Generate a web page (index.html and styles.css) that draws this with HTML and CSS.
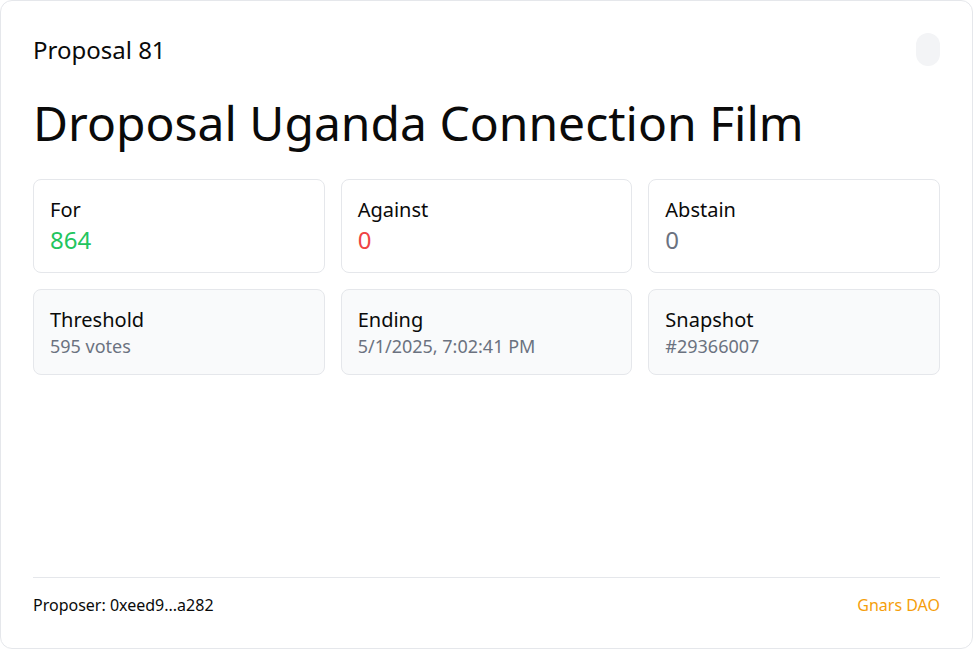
FILE: index.html
```html
<!DOCTYPE html>
<html lang="en">
<head>
<meta charset="utf-8">
<title>Proposal 81</title>
<link rel="stylesheet" href="styles.css">
</head>
<body>
<div class="card">
  <div class="header">
    <div class="number">Proposal 81</div>
    <div class="pill"></div>
  </div>
  <h1 class="title">Droposal Uganda Connection Film</h1>
  <div class="grid">
    <div class="stat">
      <div class="label">For</div>
      <div class="value green">864</div>
    </div>
    <div class="stat">
      <div class="label">Against</div>
      <div class="value red">0</div>
    </div>
    <div class="stat">
      <div class="label">Abstain</div>
      <div class="value gray">0</div>
    </div>
    <div class="stat muted">
      <div class="label">Threshold</div>
      <div class="sub">595 votes</div>
    </div>
    <div class="stat muted">
      <div class="label">Ending</div>
      <div class="sub">5/1/2025, 7:02:41 PM</div>
    </div>
    <div class="stat muted">
      <div class="label">Snapshot</div>
      <div class="sub">#29366007</div>
    </div>
  </div>
  <div class="footer">
    <div class="proposer">Proposer: 0xeed9...a282</div>
    <div class="dao">Gnars DAO</div>
  </div>
</div>
</body>
</html>
```
FILE: styles.css
```css
html, body {
  margin: 0;
  padding: 0;
  background: #ffffff;
}
body {
  font-family: "Noto Sans", "Open Sans", sans-serif;
  color: #0a0a0a;
}
.card {
  box-sizing: border-box;
  width: 973px;
  height: 649px;
  border: 1px solid #e5e7eb;
  border-radius: 12px;
  padding: 32px;
  display: flex;
  flex-direction: column;
}
.header {
  display: flex;
  justify-content: space-between;
  align-items: center;
}
.number {
  font-size: 24px;
  line-height: 32px;
}
.pill {
  width: 24px;
  height: 33px;
  border-radius: 12px;
  background: #f3f4f6;
}
.title {
  margin: 33px 0 32px;
  font-size: 48px;
  line-height: 48px;
  font-weight: 400;
}
.grid {
  display: grid;
  grid-template-columns: repeat(3, 1fr);
  column-gap: 16px;
  row-gap: 16px;
}
.stat {
  border: 1px solid #e5e7eb;
  border-radius: 8px;
  padding: 16px;
}
.stat.muted {
  background: #f9fafb;
}
.label {
  font-size: 20px;
  line-height: 28px;
}
.value {
  font-size: 24px;
  line-height: 32px;
}
.green { color: #22c55e; }
.red { color: #ef4444; }
.gray { color: #6b7280; }
.sub {
  font-size: 18px;
  line-height: 24px;
  color: #6b7280;
}
.footer {
  margin-top: auto;
  border-top: 1px solid #e5e7eb;
  padding-top: 16px;
  display: flex;
  justify-content: space-between;
  font-size: 16px;
  line-height: 22px;
}
.dao {
  color: #f59e0b;
}
```
